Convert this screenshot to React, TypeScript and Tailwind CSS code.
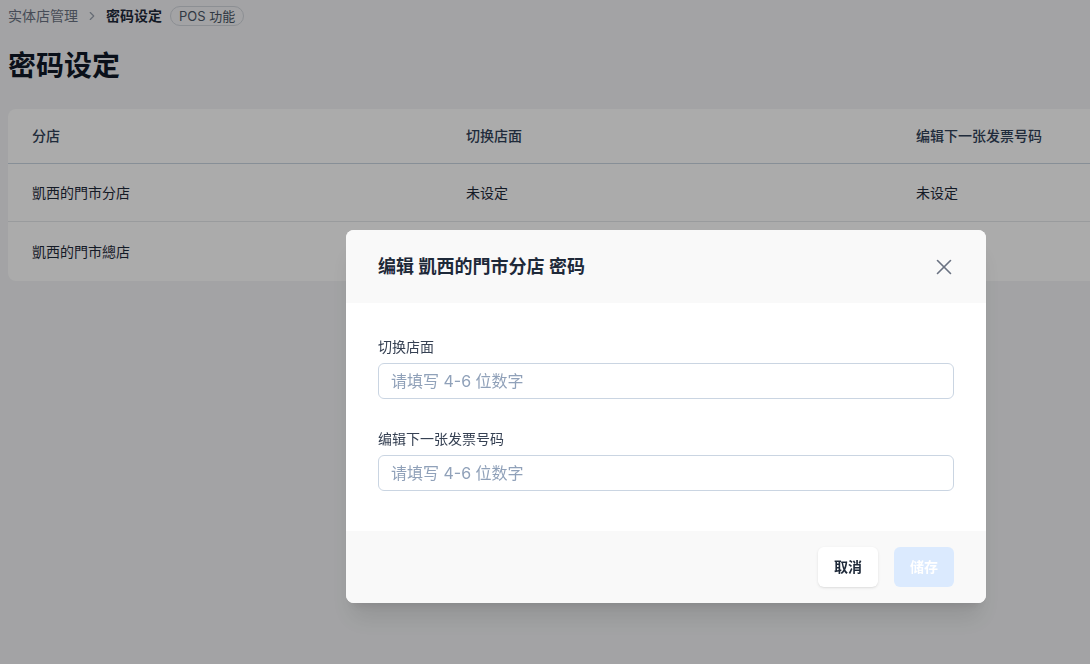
import React from 'react';
import { ChevronRight, X } from 'lucide-react';

const rows = [
  { name: '凱西的門市分店', store: '未设定', invoice: '未设定' },
  { name: '凱西的門市總店', store: '未设定', invoice: '未设定' },
];

const font = { fontFamily: 'Inter, "Noto Sans CJK SC", sans-serif' };

function Field({ label }: { label: string }) {
  return (
    <div>
      <label className="block text-sm text-gray-700 leading-5 mb-1.5">{label}</label>
      <input
        className="w-full h-9 px-3 rounded-md border border-slate-300 bg-white text-base text-gray-800 placeholder:text-slate-400 outline-none"
        placeholder="请填写 4-6 位数字"
      />
    </div>
  );
}

export default function App() {
  return (
    <div className="relative w-screen h-[664px] overflow-hidden bg-gray-100" style={font}>
      {/* Page */}
      <div className="px-2 pt-1">
        <div className="flex items-center h-6 text-sm">
          <span className="text-gray-500">实体店管理</span>
          <ChevronRight size={14} className="mx-[7px] text-gray-400" />
          <span className="font-semibold text-gray-800">密码设定</span>
          <span className="ml-2 px-2 h-5 flex items-center rounded-full border border-gray-300 text-[13px] text-gray-600">POS 功能</span>
        </div>
        <h1 className="mt-5 text-[28px] leading-9 font-bold text-gray-900">密码设定</h1>

        <div className="mt-[25px] w-[1200px] bg-white rounded-lg overflow-hidden">
          <div className="grid grid-cols-[434px_450px_1fr] h-[55px] items-center border-b border-slate-300 text-sm font-medium text-slate-700">
            <div className="pl-6">分店</div>
            <div className="pl-6">切换店面</div>
            <div className="pl-6">编辑下一张发票号码</div>
          </div>
          {rows.map((r, i) => (
            <div
              key={i}
              className={`grid grid-cols-[434px_450px_1fr] items-center text-sm text-gray-800 ${i === 0 ? 'h-[58px] border-b border-gray-200' : 'h-[59px]'}`}
            >
              <div className="pl-6">{r.name}</div>
              <div className="pl-6">{r.store}</div>
              <div className="pl-6">{r.invoice}</div>
            </div>
          ))}
        </div>
      </div>

      {/* Overlay */}
      <div className="fixed inset-0 bg-black/[0.33]" />

      {/* Modal */}
      <div className="fixed left-[346px] top-[230px] w-[640px] bg-white rounded-lg shadow-xl overflow-hidden">
        <div className="flex items-center justify-between h-[73px] px-8 bg-[#f9f9f9]">
          <h2 className="text-lg font-semibold text-gray-800">编辑 凱西的門市分店 密码</h2>
          <X size={26} strokeWidth={1.5} className="text-gray-500 -mr-[3px]" />
        </div>
        <div className="px-8 pt-[34px] pb-10 flex flex-col gap-[30px]">
          <Field label="切换店面" />
          <Field label="编辑下一张发票号码" />
        </div>
        <div className="flex justify-end gap-4 h-[72px] items-center px-8 bg-[#f9f9f9]">
          <button className="w-[60px] h-10 rounded-md bg-white shadow text-sm font-semibold text-gray-800">取消</button>
          <button className="w-[60px] h-10 rounded-md bg-blue-100 text-sm font-semibold text-white">储存</button>
        </div>
      </div>
    </div>
  );
}
